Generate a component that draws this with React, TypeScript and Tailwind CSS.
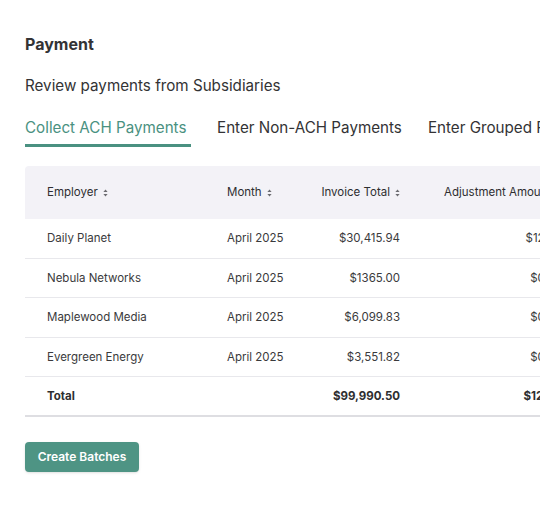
import React from "react";

interface Row {
  employer: string;
  month: string;
  invoice: string;
  adjustment: string;
}

const rows: Row[] = [
  { employer: "Daily Planet", month: "April 2025", invoice: "$30,415.94", adjustment: "$12.50" },
  { employer: "Nebula Networks", month: "April 2025", invoice: "$1365.00", adjustment: "$0.00" },
  { employer: "Maplewood Media", month: "April 2025", invoice: "$6,099.83", adjustment: "$0.00" },
  { employer: "Evergreen Energy", month: "April 2025", invoice: "$3,551.82", adjustment: "$0.00" },
];

const SortIcon = () => (
  <svg width="5" height="8" viewBox="0 0 5 8" className="ml-[5px] inline-block align-middle">
    <path d="M2.5 0.5 L4.6 3.1 L0.4 3.1 Z" fill="#6b6b70" />
    <path d="M2.5 7.5 L4.6 4.9 L0.4 4.9 Z" fill="#6b6b70" />
  </svg>
);

const App = () => {
  return (
    <div className="w-[540px] h-[505px] overflow-hidden bg-white font-['Inter',sans-serif] text-[#333335]">
      <div className="pl-[25px] pt-[34px]">
        <h1 className="text-[16px] font-bold leading-[20px] text-[#333335]">Payment</h1>
        <p className="mt-[22px] text-[15.2px] leading-[20px] text-[#333335]">Review payments from Subsidiaries</p>

        <div className="mt-[22px] flex gap-[26px] whitespace-nowrap">
          <div className="flex flex-col">
            <span className="text-[15.2px] leading-[20px] text-[#4a9181]">Collect ACH Payments</span>
            <div className="mt-[6px] h-[3px] w-[166px] bg-[#4a9181]" />
          </div>
          <span className="text-[15.2px] leading-[20px] text-[#333335]">Enter Non-ACH Payments</span>
          <span className="text-[15.2px] leading-[20px] text-[#333335]">Enter Grouped Payments</span>
        </div>

        <table className="mt-[19px] w-[559px] table-fixed border-collapse text-[11.5px] whitespace-nowrap">
          <colgroup>
            <col className="w-[180px]" />
            <col className="w-[90px]" />
            <col className="w-[127px]" />
            <col className="w-[162px]" />
          </colgroup>
          <thead>
            <tr className="h-[53px] bg-[#f3f2f7] text-[#2e2e30]">
              <th className="rounded-tl-[4px] pl-[22px] text-left font-normal">
                Employer
                <SortIcon />
              </th>
              <th className="pl-[22px] text-left font-normal">
                Month
                <SortIcon />
              </th>
              <th className="pr-[22px] text-right font-normal">
                Invoice Total
                <SortIcon />
              </th>
              <th className="pl-[22px] text-left font-normal">
                Adjustment Amount
                <SortIcon />
              </th>
            </tr>
          </thead>
          <tbody className="text-[#3a3a3c]">
            {rows.map((row, index) => (
              <tr className="h-[39.4px] border-b border-[#e8e8ec]" key={index}>
                <td className="pl-[22px] pt-[1px]">{row.employer}</td>
                <td className="pl-[22px] pt-[1px]">{row.month}</td>
                <td className="pr-[22px] pt-[1px] text-right">{row.invoice}</td>
                <td className="pr-[22px] pt-[1px] text-right">{row.adjustment}</td>
              </tr>
            ))}
            <tr className="h-[39.4px] border-b-2 border-[#dedee2] font-bold text-[#2e2e30]">
              <td className="pl-[22px] pt-[1px]">Total</td>
              <td />
              <td className="pr-[22px] pt-[1px] text-right">$99,990.50</td>
              <td className="pr-[22px] pt-[1px] text-right">$12.50</td>
            </tr>
          </tbody>
        </table>

        <button className="mt-[25px] h-[30px] w-[114px] rounded-[4px] bg-[#4e9484] text-[12px] font-semibold text-white shadow-sm">
          Create Batches
        </button>
      </div>
    </div>
  );
};

export default App;
